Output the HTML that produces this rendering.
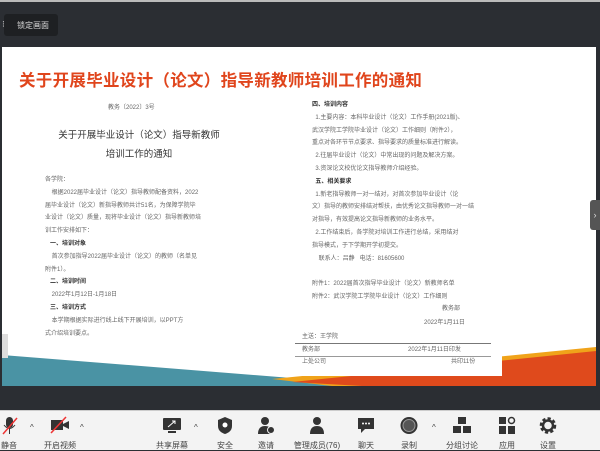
<!DOCTYPE html>
<html><head><meta charset="utf-8"><style>
*{margin:0;padding:0;box-sizing:border-box}
body{width:600px;height:450px;overflow:hidden;background:#2b2e33;font-family:"Liberation Sans","Noto Sans CJK SC",sans-serif;position:relative}
.abs{position:absolute}
.slide{left:2px;top:47px;width:594px;height:339px;background:#fff;overflow:hidden}
.t{font-size:6px;color:#666;line-height:12.8px;white-space:nowrap}
.b{font-weight:bold;color:#333}
.tb{left:0;top:410px;width:600px;height:40px;background:#f3f3f3;border-top:1px solid #ccc}
.lab{position:absolute;top:29px;font-size:8px;color:#444;transform:translateX(-50%);white-space:nowrap}
.ic{position:absolute;top:5px;transform:translateX(-50%)}
.car{position:absolute;top:12px;font-size:8px;color:#444}
</style></head><body>
<div class="abs" style="left:0;top:0;width:600px;height:2px;background:#bbb"></div>
<div class="abs" style="left:4px;top:14px;width:54px;height:22px;background:#1e2023;border-radius:3px"></div>
<div class="abs" style="left:2px;top:19px;font-size:9px;color:#ccc">⁝</div>
<div class="abs" style="left:17px;top:20px;font-size:8px;color:#ddd">锁定画面</div>
<div class="abs slide">
<svg class="abs" style="left:0;top:0" width="594" height="339">
<polygon points="0,308 390,339 0,339" fill="#4a93a4"/>
<polygon points="270,332 594,300 594,339 330,339" fill="#f0a31a"/>
<polygon points="290,335 594,304 594,339 360,339" fill="#df4a1c"/>
<rect x="290" y="300" width="210" height="29" fill="#fff"/>
</svg>
<div class="abs" style="left:17px;top:20px;font-size:16.5px;font-weight:bold;color:#e0451c;letter-spacing:0.3px">关于开展毕业设计（论文）指导新教师培训工作的通知</div>
<div class="abs t" style="left:106px;top:55px">教务〔2022〕3号</div>
<div class="abs" style="left:52px;top:79px;font-size:9.5px;color:#333;line-height:19px;text-align:center;width:170px">关于开展毕业设计（论文）指导新教师<br>培训工作的通知</div>
<div class="abs t" style="left:43px;top:127px">各学院：<br>&nbsp;&nbsp;&nbsp;&nbsp;根据2022届毕业设计（论文）指导教师配备资料，2022<br>届毕业设计（论文）新指导教师共计51名，为保障学院毕<br>业设计（论文）质量，现将毕业设计（论文）指导新教师培<br>训工作安排如下：<br>&nbsp;&nbsp;&nbsp;<span class="b">一、培训对象</span><br>&nbsp;&nbsp;&nbsp;&nbsp;首次参加指导2022届毕业设计（论文）的教师（名单见<br>附件1）。<br>&nbsp;&nbsp;&nbsp;<span class="b">二、培训时间</span><br>&nbsp;&nbsp;&nbsp;&nbsp;2022年1月12日-1月18日<br>&nbsp;&nbsp;&nbsp;<span class="b">三、培训方式</span><br>&nbsp;&nbsp;&nbsp;&nbsp;本学期根据实际进行线上线下开展培训，以PPT方<br>式介绍培训要点。</div>
<div class="abs t" style="left:310px;top:52px"><span class="b">四、培训内容</span><br>&nbsp;&nbsp;1.主要内容：本科毕业设计（论文）工作手册(2021版)、<br>武汉学院工学院毕业设计（论文）工作细则（附件2），<br>重点对各环节节点要求、指导要求的质量标准进行解读。<br>&nbsp;&nbsp;2.往届毕业设计（论文）中常出现的问题及解决方案。<br>&nbsp;&nbsp;3.资深论文校优论文指导教师介绍经验。<br>&nbsp;&nbsp;<span class="b">五、相关要求</span><br>&nbsp;&nbsp;1.新老指导教师一对一结对，对首次参加毕业设计（论<br>文）指导的教师安排结对帮扶，由优秀论文指导教师一对一结<br>对指导，有效提高论文指导新教师的业务水平。<br>&nbsp;&nbsp;2.工作结束后，各学院对培训工作进行总结，采用结对<br>指导模式，于下学期开学初提交。<br>&nbsp;&nbsp;&nbsp;&nbsp;联系人：吕静&nbsp;&nbsp;&nbsp;电话：81605600<br><br>附件1：2022届首次指导毕业设计（论文）新教师名单<br>附件2：武汉学院工学院毕业设计（论文）工作细则</div>
<div class="abs t" style="left:440px;top:256px">教务部</div>
<div class="abs t" style="left:422px;top:270px">2022年1月11日</div>
<div class="abs t" style="left:300px;top:284px">主送：王学院</div>
<div class="abs" style="left:293px;top:296px;width:196px;border-top:1px solid #777"></div>
<div class="abs t" style="left:300px;top:297px">教务部<span style="margin-left:88px">2022年1月11日印发</span></div>
<div class="abs" style="left:293px;top:309px;width:196px;border-top:1px solid #999"></div>
<div class="abs t" style="left:300px;top:309px">上处公司<span style="margin-left:125px">共印11份</span></div>
<div class="abs" style="left:0;top:287px;width:6px;height:24px;background:#ddd"></div>
</div>
<div class="abs" style="left:590px;top:200px;width:10px;height:30px;background:#555;border-radius:3px 0 0 3px;color:#ddd;font-size:9px;line-height:30px;text-align:center">›</div>
<div class="abs tb">
<svg class="ic" style="left:10px" width="16" height="20"><rect x="4" y="1" width="7" height="11" rx="3.5" fill="#333"/><path d="M2 9q5.5 7 11 0M7.5 13v5" stroke="#333" fill="none"/><path d="M1 18L15 2" stroke="#e33" stroke-width="1.5"/></svg>
<div class="lab" style="left:9px">静音</div><div class="car" style="left:30px">^</div>
<svg class="ic" style="left:60px" width="22" height="18"><rect x="2" y="4" width="12" height="10" fill="#333"/><path d="M14 8l6-3v8l-6-3z" fill="#333"/><path d="M2 17L17 1" stroke="#e33" stroke-width="1.5"/></svg>
<div class="lab" style="left:60px">开启视频</div><div class="car" style="left:80px">^</div>
<svg class="ic" style="left:172px" width="20" height="18"><rect x="1" y="2" width="18" height="12" rx="1" fill="#333"/><path d="M6 11l7-6M10 5h3v3" stroke="#fff" fill="none"/><rect x="6" y="15" width="8" height="2" fill="#333"/></svg>
<div class="lab" style="left:172px">共享屏幕</div><div class="car" style="left:194px">^</div>
<svg class="ic" style="left:225px" width="16" height="19"><path d="M8 1l7 3v6c0 5-4 7-7 8-3-1-7-3-7-8V4z" fill="#333"/><circle cx="8" cy="9" r="2.5" fill="#fff"/></svg>
<div class="lab" style="left:225px">安全</div>
<svg class="ic" style="left:266px" width="18" height="19"><circle cx="8" cy="5" r="4" fill="#333"/><path d="M1 18c0-6 3-8 7-8s6 2 6 4v4z" fill="#333"/><circle cx="14" cy="14" r="3.5" fill="#333" stroke="#f3f3f3"/></svg>
<div class="lab" style="left:266px">邀请</div>
<svg class="ic" style="left:317px" width="16" height="19"><circle cx="8" cy="5" r="4" fill="#333"/><path d="M1 18c0-6 3-8 7-8s7 2 7 8z" fill="#333"/></svg>
<div class="lab" style="left:317px">管理成员(76)</div>
<svg class="ic" style="left:366px" width="18" height="19"><path d="M1 2h16v11h-9l-4 4v-4H1z" fill="#333"/><circle cx="6" cy="7.5" r="1" fill="#fff"/><circle cx="9" cy="7.5" r="1" fill="#fff"/><circle cx="12" cy="7.5" r="1" fill="#fff"/></svg>
<div class="lab" style="left:366px">聊天</div>
<svg class="ic" style="left:409px" width="19" height="19"><circle cx="9.5" cy="9.5" r="8.5" fill="#333"/><circle cx="9.5" cy="9.5" r="6" fill="#555" stroke="#999"/></svg>
<div class="lab" style="left:409px">录制</div><div class="car" style="left:432px">^</div>
<svg class="ic" style="left:462px" width="20" height="19"><rect x="6" y="1" width="8" height="7" fill="#333"/><rect x="1" y="10" width="8" height="7" fill="#333"/><rect x="11" y="10" width="8" height="7" fill="#333"/></svg>
<div class="lab" style="left:462px">分组讨论</div>
<svg class="ic" style="left:507px" width="18" height="19"><rect x="1" y="1" width="7" height="7" fill="#333"/><rect x="1" y="10" width="7" height="8" fill="#333"/><rect x="10" y="10" width="7" height="8" fill="#333"/><circle cx="13.5" cy="4.5" r="3" fill="none" stroke="#333" stroke-width="1.5"/></svg>
<div class="lab" style="left:507px">应用</div>
<svg class="ic" style="left:548px" width="19" height="19"><circle cx="9.5" cy="9.5" r="6.5" fill="none" stroke="#333" stroke-width="3.5" stroke-dasharray="3 2"/><circle cx="9.5" cy="9.5" r="5" fill="none" stroke="#333" stroke-width="2.5"/></svg>
<div class="lab" style="left:548px">设置</div>
</div>
</body></html>
